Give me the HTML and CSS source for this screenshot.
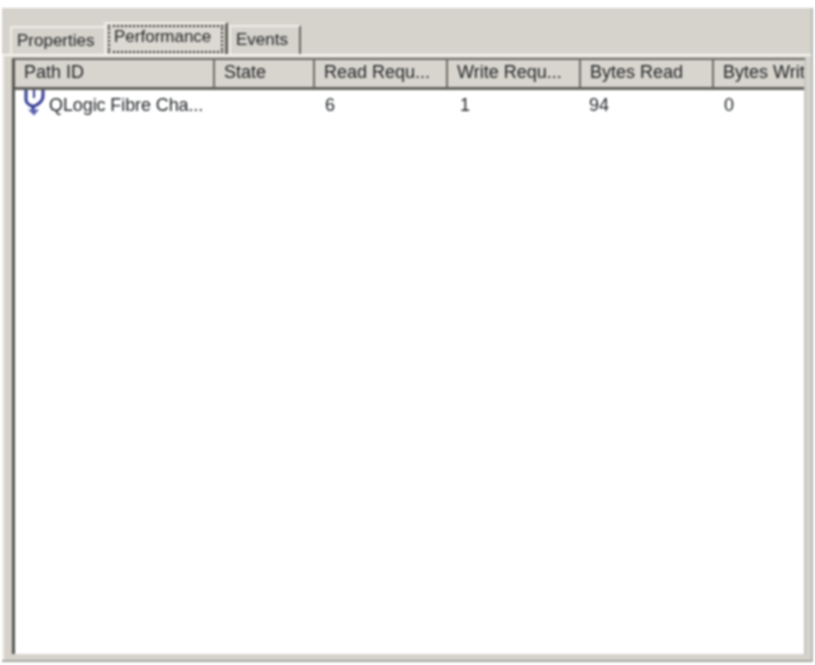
FILE: index.html
```html
<!DOCTYPE html>
<html lang="en">
<head>
<meta charset="utf-8">
<title>Performance</title>
<link rel="stylesheet" href="styles.css">
</head>
<body>
<div class="window">
  <div class="tabs">
    <div class="tab tab-first">Properties</div>
    <div class="tab tab-active"><span class="focus">Performance</span></div>
    <div class="tab tab-last">Events</div>
  </div>
  <div class="page">
    <div class="list">
      <div class="row header">
        <div class="col c1 head">Path ID</div>
        <div class="col c2 head">State</div>
        <div class="col c3 head">Read Requ...</div>
        <div class="col c3 head">Write Requ...</div>
        <div class="col c3 head">Bytes Read</div>
        <div class="col c4 head">Bytes Writ</div>
      </div>
      <div class="row data">
        <div class="col c1 name">
          <svg class="icon" viewBox="0 0 22 26" aria-hidden="true">
            <path d="M3 0V10C3 13 6 15 10 16.500C15 15 20 11 20 6V0" fill="none" stroke="#343c92" stroke-width="3"/>
            <path d="M11 0V8" stroke="#343c92" stroke-width="2"/>
            <path d="M10 16V21" stroke="#343c92" stroke-width="3"/>
            <path d="M5 19.500H16L11 25.500Z" fill="#5b62b0"/>
          </svg>
          <span class="name-text">QLogic Fibre Cha...</span>
        </div>
        <div class="col c2"></div>
        <div class="col c3 num-a">6</div>
        <div class="col c3 num-b">1</div>
        <div class="col c3 num-c">94</div>
        <div class="col c4">0</div>
      </div>
    </div>
  </div>
</div>
</body>
</html>
```
FILE: styles.css
```css
* { box-sizing: border-box; }
html, body { margin: 0; padding: 0; background: #fff; }
body {
  height: 665px;
  overflow: hidden;
  padding: 8px 2px 3px 2px;
  font-family: "Liberation Sans", Arial, sans-serif;
  font-size: 18px;
  color: #1e2124;
}
.window {
  height: 654px;
  width: 811px;
  background: #d6d3cc;
  border-bottom: 2px solid #a5a5a0;
  border-right: 2px solid #b5b5b0;
  display: flex;
  flex-direction: column;
  filter: blur(0.8px);
}
.tabs {
  display: flex;
  align-items: flex-end;
  height: 46px;
  padding-left: 8px;
  font-size: 17px;
}
.tab {
  height: 28px;
  border-top: 2px solid #eeede7;
  border-left: 2px solid #eeede7;
  border-right: 2px solid #66665f;
  padding: 3px 0 0 5px;
}
.tab-first { width: 94px; border-right: 0; }
.tab-active {
  width: 124px;
  height: 32px;
  padding: 1px 0 0 2px;
  background: #dcd9d2;
  border-right-width: 3px;
}
.focus {
  display: block;
  width: 115px;
  height: 28px;
  padding-left: 4px;
  border: 2px dotted #2c2c28;
}
.tab-last { width: 72px; height: 29px; margin-left: 1px; }
.page {
  flex: 1;
  border-top: 2px solid #f6f5f1;
  border-left: 2px solid #f0efe9;
  padding: 2px 5px 6px 8px;
  display: flex;
  min-height: 0;
}
.list {
  flex: 1;
  background: #fff;
  border-top: 2px solid #6a6a63;
  border-left: 3px solid #55554f;
  border-right: 2px solid #c4c4c0;
  overflow: hidden;
}
.row { display: flex; }
.header {
  height: 30px;
  background: #d8d5ce;
  border-bottom: 3px solid #62625c;
}
.col {
  flex: none;
  padding-left: 9px;
  white-space: nowrap;
  overflow: hidden;
}
.head {
  height: 27px;
  padding-top: 2px;
  border-right: 2px solid #6d6d66;
}
.head.c4 { border-right: 0; }
.c1 { width: 200px; }
.c2 { width: 100px; }
.c3 { width: 133px; }
.c4 { width: 90px; }
.data { height: 30px; }
.data .col { padding-left: 10px; padding-top: 5px; }
.data .num-b { padding-left: 12px; }
.data .num-c { padding-left: 8px; }
.data .name { padding-left: 8px; padding-top: 0; display: flex; gap: 4px; letter-spacing: -0.1px; }
.name-text { padding-top: 5px; }
.icon { width: 22px; height: 26px; flex: none; }
```
